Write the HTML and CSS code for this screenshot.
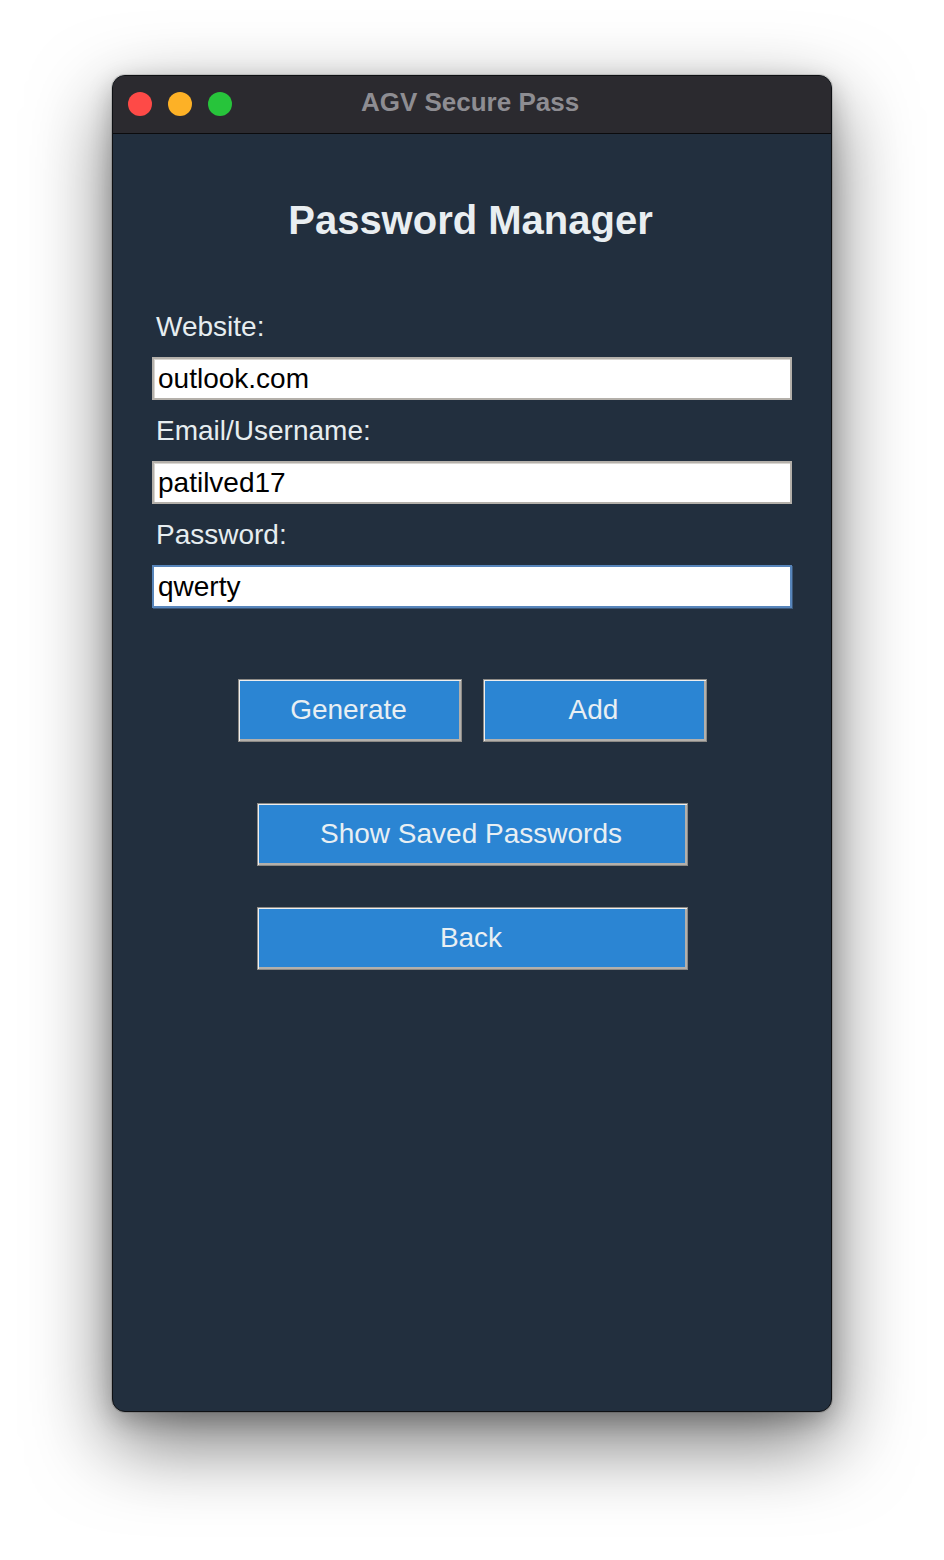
FILE: index.html
```html
<!DOCTYPE html>
<html>
<head>
<meta charset="utf-8">
<link rel="stylesheet" href="styles.css">
</head>
<body>
<div class="window">
  <div class="titlebar">
    <div class="lights">
      <span class="light red"></span>
      <span class="light yellow"></span>
      <span class="light green"></span>
    </div>
    <div class="wintitle">AGV Secure Pass</div>
  </div>
  <div class="content">
    <h1 class="heading">Password Manager</h1>
    <div class="form">
      <label class="label">Website:</label>
      <div class="field">outlook.com</div>
      <label class="label">Email/Username:</label>
      <div class="field">patilved17</div>
      <label class="label">Password:</label>
      <div class="field focused">qwerty</div>
    </div>
    <div class="row">
      <button class="btn small">Generate</button>
      <button class="btn small">Add</button>
    </div>
    <button class="btn wide first">Show Saved Passwords</button>
    <button class="btn wide second">Back</button>
  </div>
</div>
</body>
</html>
```
FILE: styles.css
```css
html, body {
  margin: 0;
  padding: 0;
  background: #ffffff;
}
body {
  width: 944px;
  height: 1560px;
  padding-top: 75px;
  box-sizing: border-box;
  font-family: "Liberation Sans", Arial, sans-serif;
}
.window {
  width: 720px;
  height: 1337px;
  margin: 0 auto;
  box-sizing: border-box;
  border-radius: 13px;
  overflow: hidden;
  background: #222f3e;
  border: 1px solid #0e1013;
  box-shadow: 0 0 0 1px rgba(0,0,0,0.12), 0 30px 80px rgba(0,0,0,0.55), 0 8px 24px rgba(0,0,0,0.22);
  display: flex;
  flex-direction: column;
}
.titlebar {
  height: 57px;
  flex: none;
  background: #2b2a2f;
  border-bottom: 1px solid #0b0b0d;
  display: flex;
  align-items: center;
  position: relative;
  box-sizing: content-box;
}
.lights {
  display: flex;
  gap: 16px;
  padding-left: 15px;
  padding-bottom: 2px;
}
.light {
  width: 24px;
  height: 24px;
  border-radius: 50%;
  display: block;
}
.red { background: #fe4a47; }
.yellow { background: #fdb126; }
.green { background: #27c43b; }
.wintitle {
  position: absolute;
  left: 0;
  right: 4px;
  top: 11px;
  text-align: center;
  font-weight: bold;
  font-size: 26px;
  line-height: 30px;
  color: #8e8d92;
  pointer-events: none;
}
.content {
  display: flex;
  flex-direction: column;
  align-items: center;
}
.heading {
  margin: 63px 0 0;
  padding-right: 3px;
  font-size: 40px;
  line-height: 46px;
  font-weight: bold;
  color: #e9eef1;
}
.form {
  align-self: stretch;
  display: flex;
  flex-direction: column;
  padding: 68px 39px 0 39px;
}
.label {
  font-size: 28px;
  line-height: 32px;
  color: #e6edf0;
  padding-left: 4px;
  margin-bottom: 14px;
}
.field {
  height: 43px;
  box-sizing: border-box;
  background: #ffffff;
  border: 2px solid #b4b0aa;
  box-shadow: inset 1px 1px 0 #d9d6d1;
  font-size: 28px;
  line-height: 39px;
  color: #000000;
  padding-left: 4px;
  margin-bottom: 15px;
}
.field.focused {
  border: 2px solid #5785bb;
  box-shadow: 1px 1px 0 #3b5677;
}
.row {
  display: flex;
  gap: 21px;
  margin-top: 56px;
}
.btn {
  height: 63px;
  box-sizing: border-box;
  background: #2b85d3;
  color: #e8eff3;
  font-family: "Liberation Sans", Arial, sans-serif;
  font-size: 28px;
  border: 1px solid #8c8a86;
  box-shadow: inset 1px 1px 0 #eeeeee, inset -2px -2px 0 #b3b0ab;
  padding: 0 2px 2px 0;
}
.btn.small {
  width: 224px;
}
.btn.wide {
  width: 431px;
}
.btn.first {
  margin-top: 61px;
}
.btn.second {
  margin-top: 41px;
}
```
